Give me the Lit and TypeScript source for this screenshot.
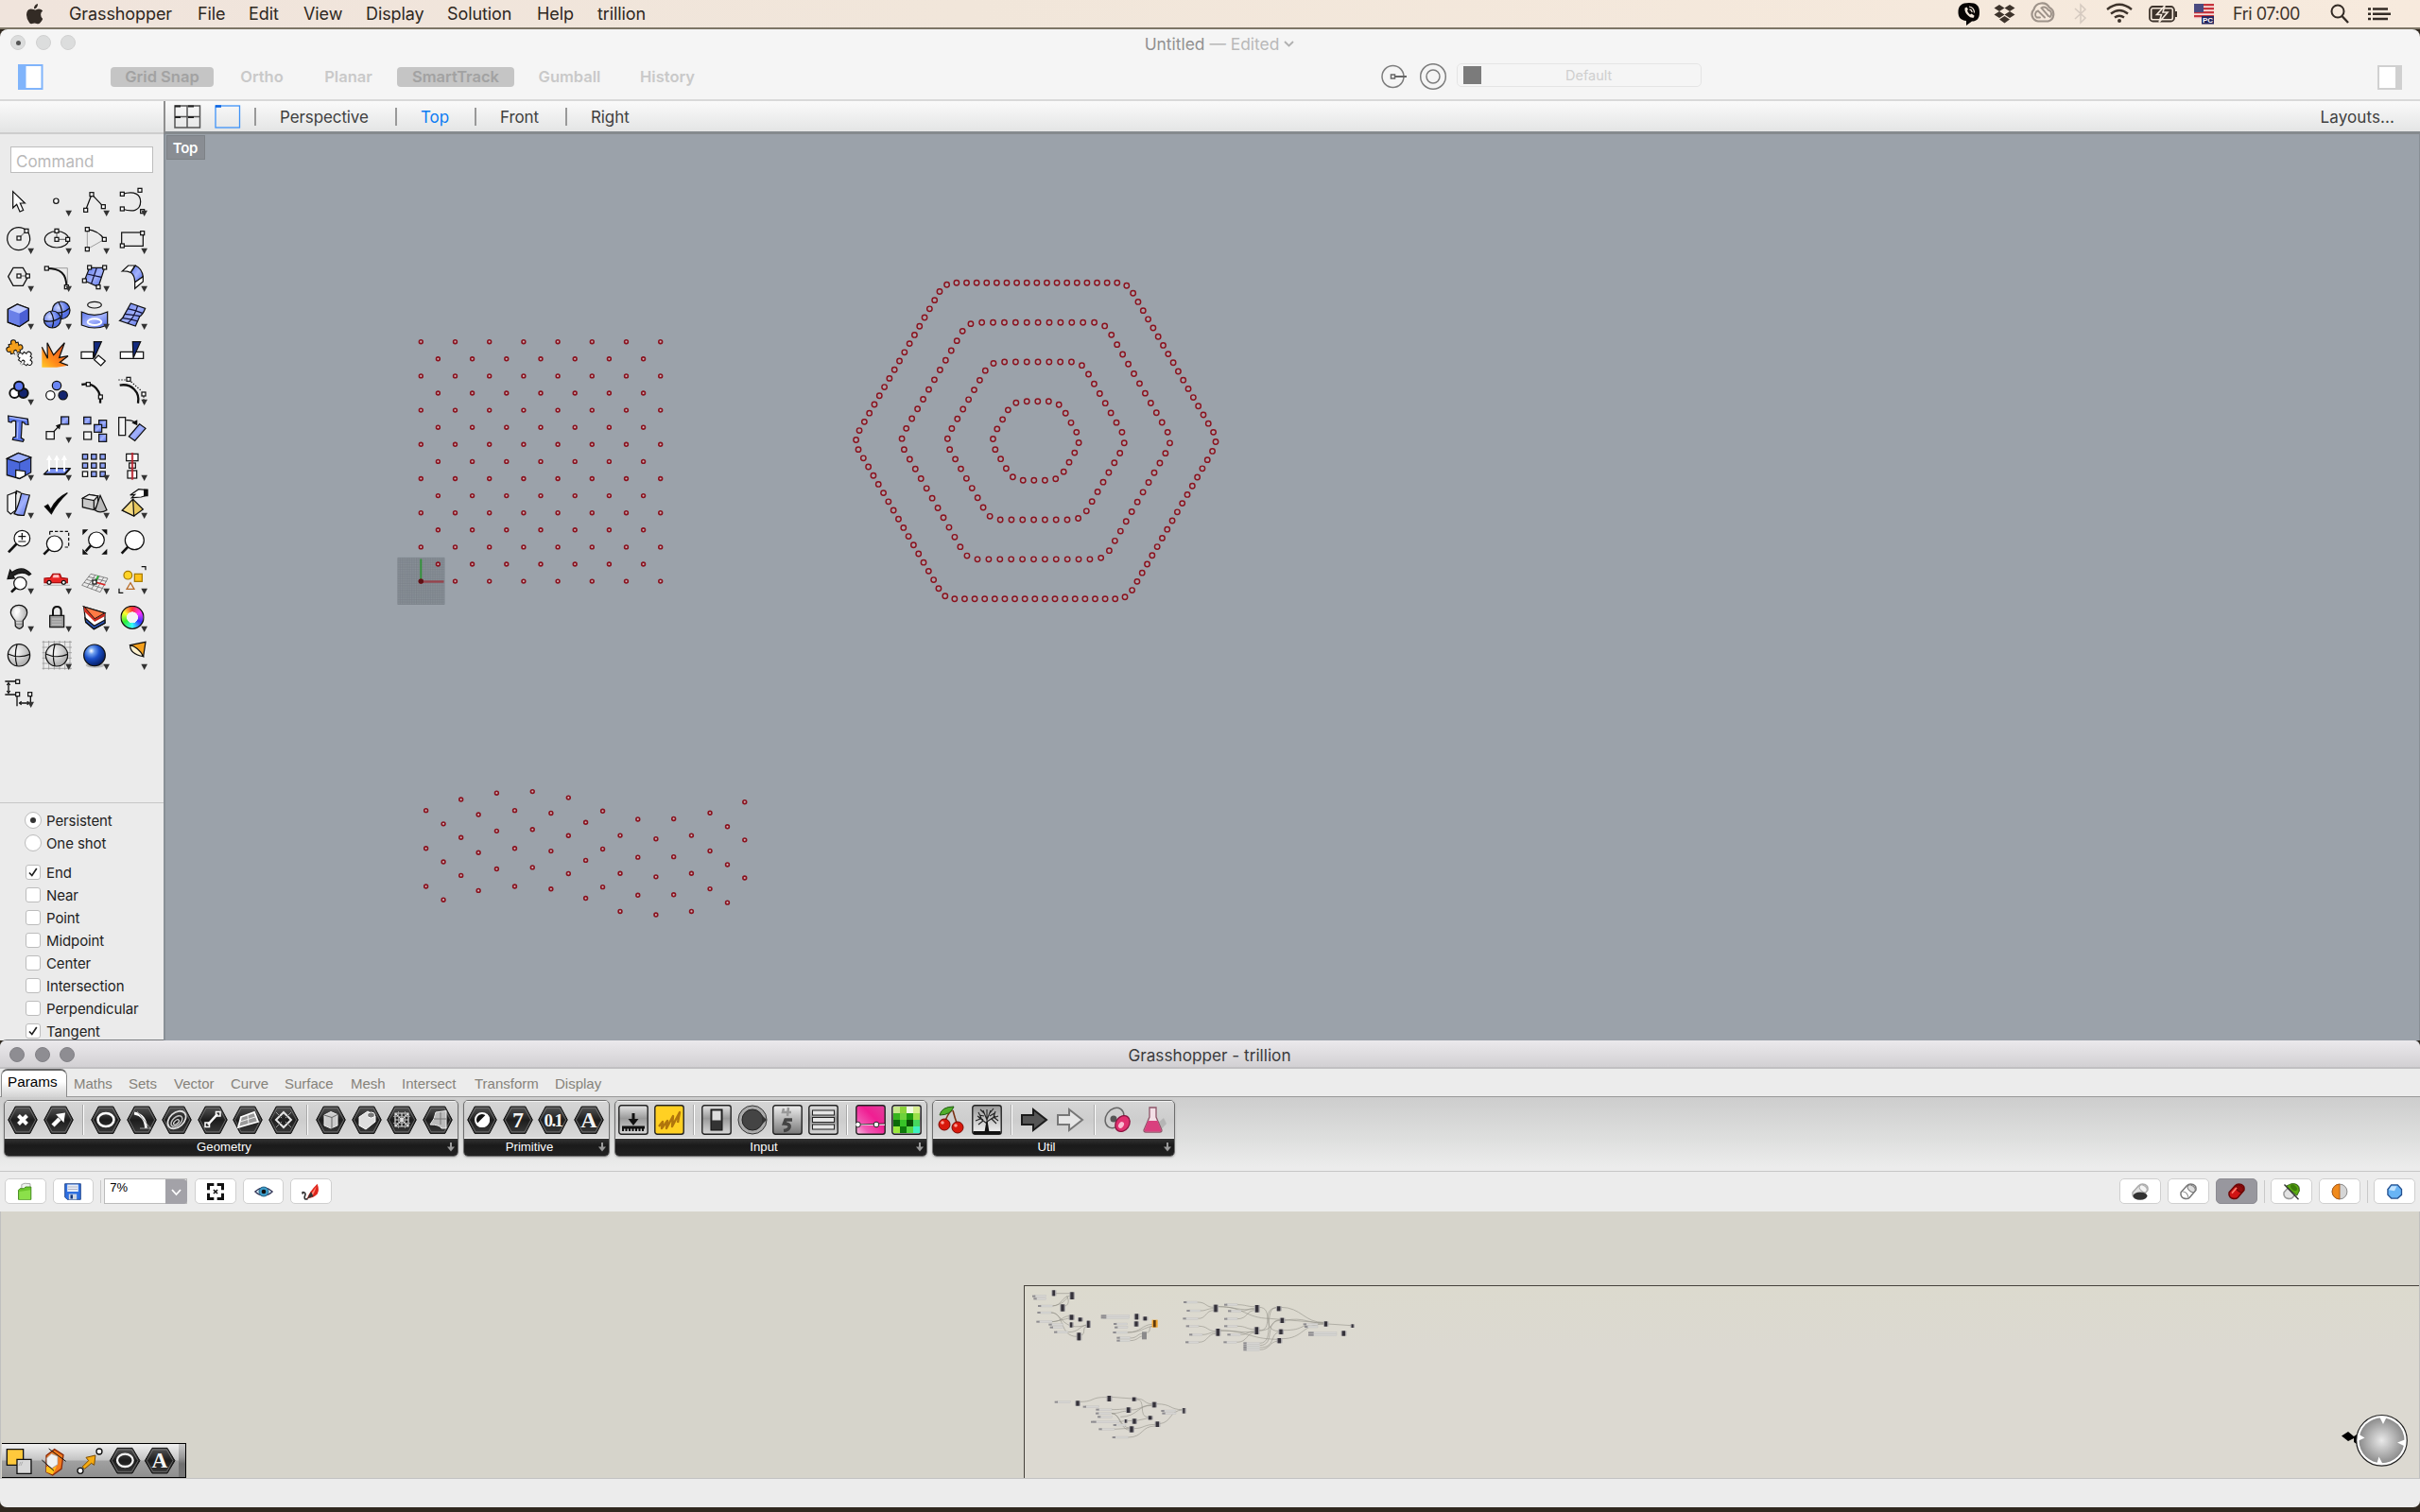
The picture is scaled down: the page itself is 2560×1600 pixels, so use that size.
import { LitElement, html, svg, css } from "lit";
import { customElement } from "lit/decorators.js";

type Cell = [string, number];

const MENUS: Cell[] = [
  ["Grasshopper", 136], ["File", 54], ["Edit", 58], ["View", 66],
  ["Display", 86], ["Solution", 95], ["Help", 64], ["trillion", 80],
];
const TABS: Cell[] = [
  ["Maths", 58], ["Sets", 48], ["Vector", 60], ["Curve", 57], ["Surface", 70],
  ["Mesh", 54], ["Intersect", 77], ["Transform", 85], ["Display", 80],
];
const SNAPS: [string, boolean][] = [
  ["End", true], ["Near", false], ["Point", false], ["Midpoint", false],
  ["Center", false], ["Intersection", false], ["Perpendicular", false], ["Tangent", true],
];

/* ---------- viewport geometry ---------- */

const ring = (x: number, y: number, r: number, w: number, fill = "none") =>
  svg`<circle cx=${x.toFixed(2)} cy=${y.toFixed(2)} r=${r} stroke-width=${w} fill=${fill}></circle>`;

function latticePoints() {
  const out = [];
  for (let row = 0; row < 15; row++) {
    const odd = row % 2;
    for (let i = 0; i < 8 - odd; i++) {
      out.push(ring(445.3 + i * 36.2 + odd * 18.1, 361.7 + row * 18.1, 1.9, 1.6, "#c9b4bb"));
    }
  }
  return out;
}

/* Points spread evenly along a hexagon whose corners are filleted with radius f. */
function hexPoints(apothem: number, count: number) {
  const cx = 1095.8, cy = 466.5, f = 18.3;
  const side = (apothem * 2) / Math.sqrt(3);
  const arc = (f * Math.PI) / 3;
  const straight = side - 2 * f * Math.tan(Math.PI / 6);
  const seg = arc + straight;
  const total = seg * 6;
  const out = [];
  const centerDist = side - f / Math.cos(Math.PI / 6);
  for (let i = 0; i < count; i++) {
    const d = (i * total) / count;
    const k = Math.floor(d / seg + 1e-9);
    const t = d - k * seg;
    const base = (k * Math.PI) / 3;
    let x: number, y: number;
    const a = t < arc ? -Math.PI / 6 + t / f : Math.PI / 6;
    x = centerDist + f * Math.cos(a);
    y = f * Math.sin(a);
    if (t > arc) {
      x -= (t - arc) * Math.sin(a);
      y += (t - arc) * Math.cos(a);
    }
    out.push(ring(cx + x * Math.cos(base) - y * Math.sin(base), cy + x * Math.sin(base) + y * Math.cos(base), 2.7, 1.45, "#a9a4ab"));
  }
  return out;
}

const WAVE: [number, number][] = [
  [276, 525.3], [287.3, 534], [298.7, 518.2], [310, 528], [321.8, 514], [333.5, 525.3], [345, 513],
  [357, 527], [368.3, 517], [379.5, 533], [390.5, 525.7], [401.8, 541.5], [413.3, 531], [425, 543.7],
  [436.5, 530.7], [448, 541.5], [460, 526.9], [471.3, 535.8], [482.5, 519.8],
];
const wavePoints = () =>
  WAVE.flatMap(([x, y]) => [0, 1, 2].map((n) => ring(x * 1.6327, (y + n * 24.6) * 1.6327, 1.9, 1.6, "#c9b4bb")));

/* ---------- sidebar tool icons (three units per pixel) ---------- */

const q = (x: number, y: number) => svg`<rect x=${x - 6} y=${y - 6} width="12" height="12" fill="#fff"></rect>`;
const bq = (x: number, y: number, s = 22, f = "url(#blue)") =>
  svg`<rect x=${x} y=${y} width=${s} height=${s} fill=${f}></rect>`;

const puzzleShape = (pad: number) => svg`<rect x=${-14 - pad} y=${-14 - pad} width=${28 + pad * 2} height=${28 + pad * 2}></rect>
  <circle cx="-18" cy="0" r=${6.5 + pad}></circle><circle cx="18" cy="2" r=${6.5 + pad}></circle><circle cx="1" cy="-18" r=${6.5 + pad}></circle>`;
const puzzle = (x: number, y: number, a: number, fill: string) => svg`<g transform=${`translate(${x} ${y}) rotate(${a})`} stroke="none">
  <g fill="#111">${puzzleShape(3)}<circle cx="0" cy="18" r="5"></circle></g><g fill=${fill}>${puzzleShape(0)}</g>
  <circle cx="0" cy="11" r="6" fill="#111"></circle><circle cx="0" cy="13" r="4" fill="#ebebeb"></circle><rect x="-3" y="13" width="6" height="10" fill="#ebebeb"></rect></g>`;

const TOOLS_A = [
  [
    svg`<path d="M41 188V240L53 229L63 252L74 247L64 225H79Z" fill="#fff"/>`,
    svg`<circle cx="178" cy="218" r="8" fill="#fff"/>`,
    svg`<path d="M272 247L291 197L328 236"/>${q(272, 247)}${q(291, 197)}${q(328, 236)}`,
    svg`<path d="M388 196C428 184 446 198 446 220C446 250 420 254 388 243"/>${q(388, 196)}${q(444, 184)}${q(388, 243)}${q(452, 251)}`,
  ],
  [
    svg`<circle cx="59" cy="338" r="36"/><path d="M60 336L83 313" stroke="#888"/>${q(60, 336)}${q(84, 313)}`,
    svg`<ellipse cx="180" cy="340" rx="38" ry="26"/><path d="M180 313V340H215" stroke="#777"/>${q(180, 313)}${q(180, 340)}${q(215, 340)}`,
    svg`<path d="M277 308V371L331 340" stroke="#777" stroke-width="2"/><path d="M277 308Q312 312 331 340"/>${q(277, 308)}${q(277, 371)}${q(331, 340)}`,
    svg`<rect x="386" y="318" width="68" height="43"/>${q(452, 320)}${q(388, 360)}`,
  ],
  [
    svg`<path d="M26 458L42 430H73L89 458L73 487H42Z"/><path d="M60 456H87" stroke="#777"/>${q(60, 456)}${q(88, 456)}`,
    svg`<path d="M148 431H214V490" stroke="#777" stroke-width="2"/><path d="M148 432C192 432 211 448 211 490" stroke-width="6"/>${q(148, 432)}${q(211, 491)}`,
    svg`<path d="M284 430H332L312 491L268 471Z" fill="url(#blue)"/><path d="M307 430L290 480M277 450L322 460" stroke="#113"/>${q(284, 429)}${q(332, 429)}${q(268, 471)}${q(312, 491)}`,
    svg`<path d="M388 441L407 423H428L415 445Q401 440 388 441Z" fill="#fff"/><path d="M415 445L430 423Q450 432 454 458L428 476Q428 455 415 445Z" fill="url(#blue)"/><path d="M428 476L454 458V474L428 496Z" fill="#fff"/>`,
  ],
  [
    svg`<path d="M25 562L55 546L91 559V597L61 617L25 603Z" fill="#6a80e8"/><path d="M25 562L55 546L91 559L62 575Z" fill="#bfcbff" stroke="none"/><path d="M62 575L91 559V597L62 616Z" fill="#4b5fd4" stroke="none"/><path d="M25 562L55 546L91 559V597L61 617L25 603Z"/>`,
    svg`<circle cx="194" cy="565" r="28" fill="url(#ball)"/><path d="M168 570Q195 580 221 558M186 540Q202 565 194 592"/><circle cx="166" cy="594" r="27" fill="url(#ball)"/><path d="M140 598Q166 606 192 588M160 568Q176 592 166 620"/>`,
    svg`<ellipse cx="300" cy="548" rx="22" ry="10"/><path d="M259 570Q300 590 341 570V612Q300 630 259 612Z" fill="url(#blue)"/><ellipse cx="300" cy="602" rx="22" ry="10" stroke="#fff" stroke-width="6"/>`,
    svg`<path d="M415 543L461 559Q453 580 443 585L430 615L380 598Q390 592 396 577Z" fill="url(#blue)"/><path d="M396 577Q425 580 445 584M437 550Q425 590 405 607M405 560Q430 565 452 574M390 590Q415 592 438 600" stroke="#113"/>`,
  ],
  [
    svg`${puzzle(80, 719, 35, "#fff")}${puzzle(46, 685, -14, "#f5a01c")}`,
    svg`<path d="M133 746V682L152 712L151 668L170 705L205 668L188 715L216 711L194 731L216 740L180 746Z" fill="url(#fire)" stroke="none"/><path d="M133 682L151 718L150 668L170 707L205 668L188 715L216 710L190 730L216 740"/>`,
    svg`<path d="M258 697H296V718H258Z" fill="#fff"/><path d="M312 708L334 726L320 741L299 722Z" fill="#fff"/><path d="M298 665H322L299 716Z" fill="#122a80"/>`,
    svg`<path d="M382 697H455V718H382Z" fill="#fff"/><path d="M421 665H446L423 716Z" fill="#122a80"/>`,
  ],
  [
    svg`<g stroke-width="6"><circle cx="46" cy="828" r="15" fill="#fff"/><circle cx="74" cy="828" r="15" fill="#13246e"/><circle cx="60" cy="806" r="15" fill="#5b76f0"/></g>`,
    svg`<circle cx="180" cy="804" r="14" fill="#6a86f5"/><circle cx="160" cy="835" r="14" fill="#fff"/><circle cx="200" cy="835" r="14" fill="#13246e"/>`,
    svg`<path d="M259 801C300 792 322 822 318 860" stroke-width="7"/>${q(280, 800)}${q(319, 840)}`,
    svg`<path d="M380 803C418 796 445 826 438 860" stroke-width="7"/><path d="M376 786H400M416 792L450 822M456 838V862" stroke-dasharray="4 5"/>${q(408, 784)}${q(456, 831)}`,
  ],
];

const arrowUp = (x: number) => svg`<path d=${`M${x} 176V136`} stroke="#fff" stroke-width="6"/><path d=${`M${x - 9} 141L${x} 124L${x + 9} 141Z`} fill="#fff" stroke="none"/>`;
const lens = (x: number, y: number, r: number, hx: number, hy: number) =>
  svg`<path d=${`M${x - r * 0.7} ${y + r * 0.7}L${hx} ${hy}`} stroke-width="8"/><circle cx=${x} cy=${y} r=${r} fill="#fff"/>`;

const TOOLS_B = [
  [
    svg`<path d="M26 0L88 10L90 28L80 27Q78 20 70 19L67 70L76 76L73 82L40 76L42 69L50 66L50 17Q38 14 36 21L27 19Z" fill="#5c78ea"/><path d="M30 5L84 14M57 20L55 72" stroke="#a9b9ff"/>`,
    svg`<rect x="147" y="50" width="25" height="24" fill="#f6f6f6"/>${bq(194, 3, 24)}<path d="M170 51L188 32"/><path d="M180 32L191 28L188 40Z" fill="#111"/>`,
    svg`${bq(266, 4)}${bq(314, 14, 24)}${bq(299, 28, 24)}${bq(266, 51, 24, "#f4f4f4")}${bq(314, 58, 24)}`,
    svg`<rect x="377" y="5" width="21" height="57" fill="#f4f4f4"/><path d="M400 14Q422 12 430 24" /><path d="M422 22L434 28L434 16Z" fill="#111"/><path d="M443 26L462 40L428 79L409 66Z" fill="url(#blue)"/>`,
  ],
  [
    svg`<path d="M22 136L58 118L98 132V180L62 200L22 188Z" fill="#4b68dc"/><path d="M22 136L58 118L98 132L62 148Z" fill="#9db0ff"/><path d="M62 148V200" stroke="#24409c"/><path d="M50 172L80 176V190L62 199L50 195Z" fill="#fff"/>`,
    svg`<path d="M140 185L158 167H222L206 185Z" fill="#7b93f5"/><path d="M140 185H206L222 167" stroke-width="6"/>${arrowUp(156)}${arrowUp(180)}${arrowUp(204)}`,
    svg`${[262, 290, 318].map((x) => [122, 150, 177].map((y) => bq(x, y, 16, x === 262 && y === 177 ? "#fff" : "#8ea2f6")))}`,
    svg`<rect x="401" y="121" width="37" height="22" fill="#fff"/><rect x="410" y="150" width="20" height="16" fill="#fff"/><rect x="405" y="174" width="29" height="24" fill="#fff"/><path d="M420 117V203" stroke="#b8202c" stroke-width="7" opacity=".85"/>`,
  ],
  [
    svg`<path d="M24 252L50 242V300L34 312L24 303Z" fill="#f4f4f4"/><path d="M52 250V238L66 244" fill="#ddd"/><path d="M68 246Q82 250 94 252L76 316Q60 318 45 311Q58 290 68 246Z" fill="url(#blue)"/>`,
    svg`<path d="M142 288L152 282L161 298Q178 262 214 245Q182 275 163 311Z" fill="#000"/>`,
    svg`<path d="M262 262L283 250L311 255V282L298 299L262 290Z" fill="#c9c9c9"/><path d="M262 262L283 250L311 255L298 269Z" fill="#f0f0f0"/><path d="M298 269V298"/><path d="M318 253L339 299Q318 312 302 300Z" fill="#b9b9b9"/>`,
    svg`<path d="M422 265L454 297L425 318L388 300Z" fill="#e8c75c"/><path d="M422 265L425 318L388 300Z" fill="#f5dc86"/><path d="M467 236L440 233L413 252L428 250L418 260L448 258L467 252Z" fill="#fff"/><path d="M458 234H468V254H458Z" fill="#111"/>`,
  ],
  [
    svg`${lens(70, 389, 25, 27, 433)}<path d="M58 383H82M70 372V394M58 399H82"/>`,
    svg`<path d="M158 367H218V417H200M158 367V380" stroke-dasharray="10 6"/>${lens(173, 406, 25, 139, 440)}`,
    svg`${lens(306, 394, 25, 272, 430)}<path d="M262 361H280L262 379ZM322 361H340V379ZM262 440V422L280 440ZM340 440H322L340 422Z" fill="#111" stroke="none"/>`,
    svg`${lens(427, 395, 30, 386, 437)}`,
  ],
  [
    svg`<path d="M24 518L32 489L38 497Q72 472 98 502L92 506Q70 490 42 508L46 516Z" fill="#222"/>${lens(64, 532, 20, 36, 560)}`,
    svg`<path d="M141 528V516L160 514L168 502H190L195 514L214 517V530H141Z" fill="#ea2626" stroke="#a11"/><path d="M170 505H186L188 514H167Z" fill="#ffc4c4" stroke="none"/><circle cx="156" cy="529" r="6" fill="#fff"/><circle cx="202" cy="529" r="6" fill="#fff"/><path d="M138 538H222" stroke="#999" stroke-width="2"/>`,
    svg`<path d="M288 502L342 516L318 560L260 538ZM275 520L334 536M281 511L338 526M267 529L326 548M302 506L276 545M316 509L290 550M329 513L304 555" stroke="#555" stroke-width="2"/><path d="M302 528L312 508" stroke="#1fae2d" stroke-width="5"/><path d="M302 528L334 537" stroke="#d22" stroke-width="5"/>${q(300, 528)}`,
    svg`<circle cx="406" cy="506" r="13" fill="#ffd428" stroke="#a67a00"/><rect x="427" y="502" width="24" height="24" fill="#ffc21c" stroke="#a67a00"/><path d="M414 530L426 550H402Z" stroke="#b86b28"/><path d="M449 479H462V490M378 548V562H391"/>`,
  ],
  [
    svg`<path d="M48 650Q34 634 34 624A26 23 0 0 1 86 624Q86 636 73 650V668Q62 684 49 668Z" fill="url(#grey)"/><path d="M50 652H72M50 661H72" stroke="#666" stroke-width="2"/><circle cx="55" cy="618" r="9" fill="#fff" opacity=".7" stroke="none"/>`,
    svg`<path d="M168 634V620Q168 606 181 606Q194 606 194 620V634" stroke-width="6"/><rect x="158" y="634" width="45" height="37" fill="#9a9a9a"/><path d="M164 645H196M164 654H196M164 662H196" stroke="#ddd" stroke-width="2"/>`,
    svg`<path d="M266 606L333 626V658L298 677L272 655Z" fill="#fff"/><path d="M266 606L333 626L300 645Z" fill="#ff7a45"/><path d="M266 606L300 645V653L268 622Z" fill="#d22e20" stroke="none"/><path d="M300 646L333 627V636L300 654Z" fill="#c5281c" stroke="none"/><path d="M270 642L299 667L333 648V658L298 677L272 655Z" fill="#2c55b8"/>`,
    svg`<foreignObject x="382" y="602" width="76" height="76"><div class="wheel"></div></foreignObject>`,
  ],
  [
    svg`<circle cx="60" cy="760" r="35" fill="url(#grey)"/><path d="M25 756Q60 772 95 757M54 726Q44 760 54 794"/>`,
    svg`<path d="M138 714V806M155 714V806M172 714V806M189 714V806M206 714V806M222 714V806M134 718H228M134 735H228M134 752H228M134 769H228M134 786H228M134 802H228" stroke="#888" stroke-width="2"/><circle cx="180" cy="760" r="35" fill="url(#grey)"/><path d="M145 756Q180 772 215 757M174 726Q164 760 174 794"/>`,
    svg`<ellipse cx="302" cy="792" rx="30" ry="8" fill="#999" stroke="none" opacity=".6"/><circle cx="300" cy="760" r="34" fill="url(#deep)"/>`,
    svg`<path d="M413 728L462 718L455 764Z" fill="#f5a01c"/><path d="M413 728Q412 756 455 764Q440 735 413 728Z" fill="#fff3cf"/>`,
  ],
  [
    svg`<path d="M16 843H50M16 885H50M27 850V878M54 890V922M97 890V910M62 912H90" stroke-width="4"/><path d="M22 855L27 848L32 855M22 873L27 880L32 873M68 907L62 912L68 917M86 907L92 912L86 917" fill="none"/>${q(56, 844)}${q(56, 884)}${q(95, 884)}`,
  ],
];

const DROPS = ["0111", "1111", "1111", "1111", "0000", "1001", "0100", "1111", "1111", "0000", "1111", "1111", "0111", "1"];

function toolCell(r: number, c: number, icon: unknown) {
  const oy = r < 6 ? 159 + 120 * r : -21 + 120 * (r - 6);
  const ox = 120 * c;
  return html`<svg class="tool" viewBox=${`${ox} ${oy} 120 120`} fill="none" stroke="#111" stroke-width="3.7">
    ${icon}
    ${DROPS[r][c] === "1"
      ? svg`<path d=${`M${ox + 88} ${oy + 89}h20l-10 19z`} fill="#333" stroke="none"></path>`
      : ""}
  </svg>`;
}

/* ---------- ribbon icons ---------- */

const hex = (inner: unknown) => html`<svg class="rib" viewBox="0 0 32 32">
  <path d="M8.2 2H23.8L31.3 16L23.8 30.4H8.2L.7 16Z" fill="url(#hexg)" stroke="#111" stroke-width="1"></path>
  <path d="M9 3.6H23L29.6 16L23 28.8H9L2.4 16Z" fill="none" stroke="#777" stroke-width=".8"></path>
  <g fill="none" stroke="#fff" stroke-width="2">${inner}</g>
</svg>`;
const tile = (inner: unknown, fill = "url(#tileg)") => html`<svg class="rib" viewBox="0 0 32 32">
  <rect x=".8" y=".8" width="30.4" height="30.4" rx="2.5" fill=${fill} stroke="#222" stroke-width="1.4"></rect>${inner}
</svg>`;
const bare = (inner: unknown) => html`<svg class="rib" viewBox="0 0 32 32">${inner}</svg>`;
const glyph = (t: string, size: number, y: number, len?: number) =>
  svg`<text x="16" y=${y} text-anchor="middle" font-family="Liberation Serif, serif" font-weight="700" font-size=${size} letter-spacing=${len ?? 0} fill="#f4f4f4" stroke="none">${t}</text>`;

const SEP = html`<i class="rsep"></i>`;

const GEOMETRY = [
  hex(svg`<path d="M11.5 11.5L20.5 20.5M20.5 11.5L11.5 20.5" stroke-width="4"/>`),
  hex(svg`<path d="M10 22L17 15" stroke-width="4.5"/><path d="M13 10L23 8.5L21.5 19Z" fill="#fff" stroke="none"/>`),
  SEP,
  hex(svg`<ellipse cx="16" cy="16" rx="8.5" ry="7" stroke-width="2.6"/>`),
  hex(svg`<path d="M8 9Q20 11 20.500 25" stroke-width="2.800"/><path d="M11 7L25 25M14 25H26" stroke="#999" stroke-width="1"/>`),
  hex(svg`<g transform="rotate(-42 16 16)"><ellipse cx="16" cy="16" rx="11" ry="7.500" stroke-width="1.8" stroke="#ddd"/><ellipse cx="15" cy="17" rx="7" ry="4.200" stroke-width="1.6" stroke="#bbb"/><ellipse cx="14" cy="17.500" rx="3.500" ry="1.800" stroke-width="1.200" stroke="#ddd"/></g>`),
  hex(svg`<path d="M11 21L21 10" stroke-width="2.6"/><rect x="8" y="19" width="4.500" height="4.500" stroke-width="1.5"/><rect x="19.500" y="7.500" width="4.500" height="4.500" stroke-width="1.5"/>`),
  hex(svg`<path d="M9 13L23 8L27 18L6 24Z" fill="#999" stroke-width="1.8"/><path d="M16 11L17 20M8 18L24 13" stroke="#eee" stroke-width="1"/>`),
  hex(svg`<path d="M16 8L24 16L16 24L8 16Z" stroke-width="2" stroke="#e4e4e4"/><path d="M8 8L24 24M24 8L8 24" stroke="#999" stroke-width="1"/><path d="M16 12.500L19.500 16L16 19.500L12.500 16Z" fill="#222" stroke="none"/>`),
  SEP,
  hex(svg`<path d="M9 11L16 7.500L23 10.500V22L16 25L9 22Z" fill="#ccc" stroke="#eee" stroke-width="1"/><path d="M9 11L17 13.500V25M17 13.500L23 10.500" stroke="#666" stroke-width="1"/>`),
  hex(svg`<path d="M8 13L17 7L25 12V18L15 26L8 22Z" fill="#ddd" stroke="#fff" stroke-width="1"/><ellipse cx="20.500" cy="11" rx="4" ry="3" fill="#777" stroke="#fff" stroke-width="1"/>`),
  hex(svg`<path d="M9 9H23V23H9ZM9 16H23M16 9V23M9 9L23 23M23 9L9 23" stroke="#ddd" stroke-width="1.200"/><path d="M12.500 7V25M19.500 7V25M7 12.500H25M7 19.500H25" stroke="#aaa" stroke-width=".8"/>`),
  hex(svg`<path d="M14 8L25 6.500V25H20Q18 21 8 21Q13 15 14 8Z" fill="#bbb" stroke="#eee" stroke-width="1"/><path d="M19 8V21M12 15H25" stroke="#777" stroke-width="1"/>`),
];
const PRIMITIVE = [
  hex(svg`<circle cx="16" cy="16" r="7" fill="#111" stroke-width="2"/><path d="M21 11A7 7 0 0 1 11 21Z" fill="#fff"/>`),
  hex(glyph("7", 24, 23.5)),
  hex(glyph("0.1", 19, 22.5, -1.6)),
  hex(glyph("A", 24, 24)),
];
const INPUT = [
  tile(svg`<path d="M4 26.500H28" stroke="#111" stroke-width="3" stroke-dasharray="2 1.500"/><path d="M4 24H28M16 9V16" stroke="#111" stroke-width="3"/><path d="M10.500 15H21.500L16 22Z" fill="#111"/>`),
  tile(svg`<path d="M5 23L9 18L8 25L14 17L13 25L20 12L19 23L27 8L25 19" fill="none" stroke="#b0750c" stroke-width="2.400" stroke-linejoin="round"/>`, "#ffd023"),
  SEP,
  tile(svg`<rect x="10" y="5" width="12" height="22" fill="#333" stroke="#111"/><rect x="11.500" y="6.500" width="9" height="10" fill="#ddd"/>`),
  bare(svg`<circle cx="16" cy="16" r="15" fill="#aaa" stroke="#333"/><circle cx="16" cy="16" r="11" fill="#444" stroke="#222"/><path d="M26 11L31 16L26 21Z" fill="#333"/>`),
  tile(svg`<path d="M12 4L11 8H20M17 3L16 12" stroke="#999" stroke-width="2.500" fill="none"/><path d="M21 16H14L12.500 20Q19 20 18 24Q17 27 12 27.500" stroke="#444" stroke-width="3.500" fill="none"/>`, "url(#tiled)"),
  tile(svg`<g fill="#e6e6e6" stroke="#222"><rect x="4.500" y="6" width="23" height="5"/><rect x="4.500" y="13.500" width="23" height="5"/><rect x="4.500" y="21" width="23" height="5"/></g>`),
  SEP,
  tile(svg`<path d="M1 21H31" stroke="#fff" stroke-width="1.500"/><path d="M1 21L31 20" stroke="#111" stroke-width=".8"/><circle cx="22" cy="21" r="2.800" fill="#fff" stroke="#222"/><circle cx="2.500" cy="21" r="2.800" fill="#fff" stroke="#222"/>`, "url(#pink)"),
  tile(svg`${["#c5e88a", "#8bd43a", "#f0fae0", "#d8ee90", "#37b41e", "#6fd23b", "#1f9a10", "#9be04a", "#0c6a08", "#38c428", "#0a4f05", "#46d85e", "#9aea3e", "#0e7a0c", "#58d842", "#3ff0c0"].map(
    (f, i) => svg`<rect x=${2 + (i % 4) * 7} y=${2 + Math.floor(i / 4) * 7} width="7" height="7" fill=${f}></rect>`)}`),
];
const UTIL = [
  bare(svg`<path d="M17 6Q12 10 9 20M18 6Q20 14 23 22" fill="none" stroke="#7a3414" stroke-width="1.600"/><path d="M4 11Q6 2 19 2Q16 11 4 11Z" fill="#4fae2a" stroke="#1f5a10"/><circle cx="9" cy="21" r="6" fill="#d8190c" stroke="#7c0a04"/><circle cx="23" cy="24" r="6" fill="#d8190c" stroke="#7c0a04"/><circle cx="7" cy="19" r="1.800" fill="#ff9c90"/><circle cx="21" cy="22" r="1.800" fill="#ff9c90"/>`),
  tile(svg`<path d="M16 29V14M16 20L7 13M16 18L25 12M16 16L12 6M16 16L20 6M9 15L4 17M10 14L7 8M23 13L28 17M23 13L25 7M13 9L9 5M19 9L23 4M21 15L26 20M12 17L7 21M16 14L16 5M12 16L6 12M20 15L28 12M13 12L8 11M19 12L24 9" stroke="#222" stroke-width="1.100" fill="none"/><path d="M13.500 29L15.300 18H16.700L18.500 29Z" fill="#111"/><rect x="1.500" y="28" width="29" height="3" fill="#111"/>`, "url(#tilel)"),
  SEP,
  bare(svg`<path d="M3 11H15V5L29 16L15 27V21H3Z" fill="#555" stroke="#1b1b1b" stroke-width="2"/>`),
  bare(svg`<path d="M3 11H15V5L29 16L15 27V21H3Z" fill="#e6e6e6" stroke="#777" stroke-width="2"/>`),
  SEP,
  bare(svg`<ellipse cx="13" cy="14" rx="9" ry="11.500" transform="rotate(35 13 14)" fill="#cfcfcf" stroke="#666" stroke-width="1.500"/><circle cx="12" cy="15" r="3.500" fill="#555"/><ellipse cx="21.500" cy="20" rx="7" ry="9" transform="rotate(35 21.500 20)" fill="#e0306f" stroke="#8a1440" stroke-width="1.300"/><ellipse cx="20" cy="21.500" rx="2.600" ry="3.600" transform="rotate(35 20 21.500)" fill="#f9bdd2"/>`),
  bare(svg`<path d="M27 14L30 20L22 29H10Z" fill="#000" opacity=".12"/><path d="M12 3H19V13L25 27Q25 29 23 29H8Q6 29 6 27L12 13Z" fill="#f3dfe6" stroke="#8d5468" stroke-width="1.300"/><path d="M10.500 17H20.500L24.500 27Q24 28.500 23 28.500H8Q6.500 28 6.500 27Z" fill="#d9407e"/>`),
];
const ribbonGroup = (name: string, items: unknown[], w: number) => html`
  <section class="group" style=${`width:${w}px`}>
    <div class="gicons">${items.map((i) => (i === SEP ? i : html`<span class="gcell">${i}</span>`))}</div>
    <div class="glabel"><span>${name}</span>
      <svg class="gdrop" viewBox="0 0 8 10"><path d="M4 0V6" stroke="#aaa" stroke-width="1.800"></path><path d="M0 4.500H8L4 9.500Z" fill="#999"></path></svg>
    </div>
  </section>`;

/* ---------- canvas toolbar ---------- */

const btn = (inner: unknown, on = false) => html`<span class="btn ${on ? "on" : ""}"><svg viewBox="0 0 24 24">${inner}</svg></span>`;
const cyl = (fill: string, line: string, end: string) =>
  svg`<path d="M2.500 13L10 4.500Q13 1.500 18 3Q22.500 5 21.500 10L13.500 19.500Q11 22 6 20.500Q1.500 18 2.500 13Z" fill=${fill} stroke=${line} stroke-width="1.800"/><ellipse cx="15.800" cy="8" rx="5.500" ry="3.600" transform="rotate(42 15.800 8)" fill=${end} stroke=${line} stroke-width="1.200"/>`;

/* ---------- node graph (three units per pixel) ---------- */

const NODES: [number, number, number, number][] = [
  [129, 76, 10, 18], [186, 82, 12, 23], [156, 121, 12, 22], [184, 154, 13, 16], [212, 163, 12, 12], [185, 178, 9, 16],
  [239, 173, 10, 22], [208, 211, 12, 24], [391, 151, 12, 18], [418, 160, 12, 12], [390, 175, 12, 16],
  [642, 122, 12, 23], [649, 198, 12, 23], [773, 123, 12, 23], [772, 193, 12, 23], [842, 127, 12, 15], [853, 164, 12, 16],
  [849, 200, 12, 16], [844, 228, 12, 16], [992, 175, 11, 16], [1048, 205, 12, 16], [1078, 184, 8, 11],
  [204, 427, 12, 16], [304, 411, 12, 18], [383, 416, 12, 12], [447, 431, 12, 17], [365, 448, 12, 17], [384, 484, 12, 16],
  [359, 486, 7, 11], [434, 475, 12, 12], [457, 493, 12, 17], [375, 508, 12, 19], [543, 450, 8, 17],
];
const PANELS: [number, number, number][] = [
  [66, 95, 44], [70, 103, 40], [84, 126, 46], [82, 147, 44], [79, 176, 50], [118, 185, 46], [122, 194, 42], [135, 209, 44],
  [284, 157, 90], [284, 163, 90], [324, 183, 44], [327, 194, 42], [322, 210, 46], [334, 227, 42], [334, 236, 42],
  [546, 114, 44], [556, 141, 44], [544, 166, 48], [554, 190, 40], [564, 217, 42], [552, 241, 42],
  [675, 122, 42], [687, 142, 42], [675, 167, 42], [675, 190, 42], [685, 217, 42], [673, 241, 42],
  [736, 244, 52], [736, 251, 52], [736, 258, 52], [736, 265, 52], [926, 184, 46], [930, 192, 42], [942, 211, 90], [942, 218, 90],
  [137, 431, 50], [227, 446, 50], [268, 455, 50], [267, 467, 50], [273, 478, 46], [252, 494, 90], [323, 504, 40],
  [277, 517, 50], [320, 543, 50], [475, 459, 46], [478, 467, 44],
];
const WIRES = `M140 86H186M130 126C160 126 160 94 186 94M130 126C165 120 165 110 180 98M176 94C186 115 178 124 170 126
M126 147C170 147 150 223 208 223M126 147C160 147 160 210 239 186M128 176C160 176 160 158 184 158M128 176C160 172 165 168 184 165M180 209C215 209 215 190 239 186M220 218C238 218 222 195 239 190
M368 210C410 210 415 185 447 184M368 210C410 210 420 195 447 190M376 228C400 228 400 214 414 214M376 236C400 236 405 222 414 222M430 210C445 210 432 192 447 190
M590 114C620 114 615 130 642 130M600 141C620 141 620 134 642 134M592 166C620 166 615 140 642 140M594 190C625 190 620 206 649 206M606 217C625 217 625 210 649 210M594 241C625 241 620 214 649 214
M717 122C745 122 745 128 773 128M729 142C750 142 750 133 773 133M717 167C750 167 745 140 773 140M717 190C745 190 745 200 772 200M727 217C750 217 750 206 772 206M715 241C750 241 745 211 772 211
M655 128C740 128 740 164 820 166L992 180M655 128C710 128 720 142 773 136M662 204C750 204 750 230 844 232M662 204C720 204 720 212 772 208
M785 130C835 130 790 205 849 206M785 204C835 204 790 132 842 132M785 204C835 204 820 172 853 172M788 244C840 244 795 132 842 130M788 251C840 251 800 172 853 170M788 258C840 258 820 212 849 210M788 265C820 265 820 238 844 238
M855 130C920 130 930 180 992 178M866 172C930 160 940 182 992 180M862 203C940 203 900 182 992 182M857 230C930 230 920 182 992 184M1003 183L1078 188
M218 430C265 430 250 414 304 416M317 415L383 420M396 420C425 420 420 437 447 437M396 422C430 422 400 479 434 479M460 437C510 437 500 455 543 455M318 455C345 455 345 453 365 453M318 467C345 467 345 460 365 460M318 467C345 467 345 513 375 513M318 467C345 467 345 520 375 520M346 478C400 478 400 440 447 442M378 456C410 456 410 442 447 440M342 494C365 488 365 492 384 490M397 490L434 482M327 517L375 514M388 515C420 515 420 502 457 502M370 543C420 543 410 507 457 507M470 500C510 495 500 458 543 456`;

@customElement("app-root")
export class AppRoot extends LitElement {
  static styles = css`
    :host { display: block; width: 2560px; height: 1600px; overflow: hidden; background: #30281f; font-family: Inter, "Liberation Sans", sans-serif; color: #2b2621; }
    * { box-sizing: border-box; }
    svg { display: block; flex: none; }
    .screen { width: 2560px; height: 1600px; display: flex; flex-direction: column; position: relative; white-space: nowrap; }
    .defs { width: 0; height: 0; position: absolute; }

    .menubar { height: 31px; flex: none; display: flex; align-items: center; background: linear-gradient(90deg, #f0e4dc, #f1e6da 40%, #f7eadd); border-bottom: 2px solid #7d7566; padding: 0 31px 0 27px; }
    .apple { width: 19px; height: 22px; margin-right: 27px; }
    .menu { font-size: 18px; letter-spacing: -0.1px; flex: none; color: #2e2721; }
    .status { margin-left: auto; display: flex; align-items: center; color: #3d332b; }
    .clock { font-size: 18px; width: 103px; letter-spacing: -0.45px; }

    .rhino { height: 1070px; flex: none; display: flex; flex-direction: column; background: #f5f5f5; border-radius: 8px 8px 0 0; overflow: hidden; }
    .titlerow { height: 28px; display: flex; align-items: center; padding-left: 11px; position: relative; }
    .light { width: 16px; height: 16px; border-radius: 50%; background: #dcdddd; border: 1px solid #d0d0d0; margin-right: 10.500px; display: grid; place-items: center; }
    .light.dot::after { content: ""; width: 5px; height: 5px; border-radius: 50%; background: #555; }
    .title { position: absolute; left: 0; right: 0; top: 5px; display: flex; justify-content: center; align-items: center; gap: 5px; padding-left: 20px; font-size: 17.400px; color: #919191; }
    .title .dim { color: #b9b9b9; }
    .tools { height: 48px; display: flex; align-items: flex-start; padding: 8px 19px 0; border-bottom: 2px solid #d9d9d9; }
    .mode { height: 21px; margin-top: 4px; border-radius: 4px; font-size: 16.500px; line-height: 21px; font-weight: 600; color: #c9c9c9; text-align: center; flex: none; }
    .mode.on { background: #c5c5c5; color: #a2a2a2; }
    .rings { margin-left: 724px; }
    .field { width: 259px; height: 25px; border: 1.500px solid #e4e4e4; border-radius: 5px; display: flex; align-items: center; padding-left: 6px; font-size: 14.500px; color: #cfcfcf; }
    .swatch { width: 19px; height: 19px; background: #7b7b7b; margin-right: 89px; }
    .panelicon { margin-left: auto; }

    .viewbar { height: 35px; display: flex; flex: none; background: linear-gradient(#fafafa, #e2e3e3); }
    .corner { width: 173px; border-bottom: 2px solid #cdcdcd; flex: none; }
    .views { flex: 1; border-left: 2px solid #8f8f8f; border-bottom: 3px solid #858a8e; display: flex; align-items: center; padding: 0 27px 0 9px; font-size: 17px; color: #404040; }
    .vsep { width: 2px; height: 19px; background: #999; flex: none; }
    .view { flex: none; padding: 2px 0 0 25px; letter-spacing: -0.1px; }
    .view.sel { color: #0a7bf3; }
    .layouts { margin-left: auto; padding-top: 2px; letter-spacing: 0.1px; }

    .work { flex: 1; display: flex; min-height: 0; }
    .side { width: 173px; flex: none; background: #ebebeb; display: flex; flex-direction: column; }
    .command { margin: 13px 0 10px 11px; width: 151px; height: 28px; flex: none; background: #fff; border: 1px solid #bdbdbd; font-size: 17px; line-height: 30px; padding-left: 5px; color: #b9b9b9; }
    .palette { display: grid; grid-template-columns: repeat(4, 40px); grid-auto-rows: 40px; height: 656px; flex: none; }
    .tool { width: 40px; height: 40px; overflow: visible; }
    .wheel { width: 76px; height: 76px; border-radius: 50%; border: 4px solid #111; background: radial-gradient(circle, #f3f3f3 0 36%, transparent 38%), conic-gradient(#f33, #f3f, #33f, #3ff, #3e3, #ff3, #f33); }
    .snaps { border-top: 1px solid #c6c6c6; padding: 6px 0 0 25.500px; font-size: 15px; color: #1e1e1e; letter-spacing: -0.1px; }
    .snap { height: 24px; display: flex; align-items: center; gap: 6.500px; }
    .snap.gap { margin-bottom: 7px; }
    .radio { width: 18px; height: 18px; margin-right: -1px; border-radius: 50%; background: #fff; border: 1px solid #bbb; display: grid; place-items: center; }
    .radio.on::after { content: ""; width: 6px; height: 6px; border-radius: 50%; background: #333; }
    .check { width: 16px; height: 16px; border-radius: 3px; background: #fff; border: 1px solid #bcbcbc; margin-left: 1px; }
    .port { flex: 1; position: relative; background: #9ba2aa; border-left: 2px solid #899097; border-right: 1px solid #888f96; overflow: hidden; }
    .scene { width: 2384px; height: 959px; }
    .tag { position: absolute; left: 1px; top: 1px; width: 41px; height: 26px; background: #898d93; border: 1px solid #7d8287; color: #fff; font-size: 15px; font-weight: 600; line-height: 26px; text-align: center; letter-spacing: -0.3px; padding-right: 1px; }

    .gh { height: 494px; flex: none; display: flex; flex-direction: column; background: #ececec; border-radius: 7px; overflow: hidden; box-shadow: 0 -1px 0 #77797d; }
    .ghtitle { height: 30px; flex: none; position: relative; display: flex; align-items: center; padding-left: 10px; background: linear-gradient(#ebe9ec, #d2d0d3); border-bottom: 2px solid #c0bfc1; }
    .ghtitle .light { background: #8e8d92; border-color: #828186; margin-top: 1px; }
    .ghtitle .name { position: absolute; inset: 2px 1px 0 0; display: grid; place-items: center; font-size: 17.200px; color: #3b3b3d; }
    .tabs { height: 30px; flex: none; display: flex; align-items: center; padding-left: 1px; font: 15px/18px "Liberation Sans", Arial, sans-serif; color: #85827a; border-bottom: 1px solid #999; }
    .tab { flex: none; padding-top: 2px; }
    .tab.cur { width: 70px; height: 31px; align-self: flex-start; margin-right: 7px; padding: 3px 0 0 6px; color: #000; font-size: 15.300px; background: linear-gradient(#fff, #fff 40%, #cfcfcf); border: 1px solid #8a8a8a; border-top: 2px solid #666; border-bottom: 0; border-radius: 7px 7px 0 0; }
    .ribbon { height: 78px; flex: none; display: flex; gap: 5px; padding: 3px 0 0 4px; background: linear-gradient(#cdcdcd, #dfe0df 60%, #ececec 95%); }
    .group { height: 60px; flex: none; border: 1px solid #6e6e6e; border-radius: 5px; overflow: hidden; display: flex; flex-direction: column; background: linear-gradient(#d6d6d6, #cdcdcd 35%, #e4e4e4); box-shadow: 0 1px 2px #8888; }
    .gicons { height: 40px; display: flex; align-items: center; padding-left: .5px; border: solid #f2f2f2; border-width: 1px 0 1px; }
    .gcell { width: 37.500px; display: grid; place-items: center; flex: none; }
    .rib { width: 32px; height: 32px; }
    .rsep { width: 13px; height: 32px; flex: none; background: linear-gradient(90deg, transparent 5.500px, #aaa 5.500px 6.500px, #fff 6.500px 7.500px, transparent 7.500px); }
    .glabel { flex: 1; background: linear-gradient(#333, #1a1a1a 40%, #222); color: #fff; display: flex; justify-content: center; position: relative; font: 13.200px/17px "Liberation Sans", Arial, sans-serif; padding-right: 15px; }
    .gdrop { width: 8px; height: 10px; position: absolute; right: 3px; top: 4px; }
    .bar { height: 43px; flex: none; border-top: 1px solid #c6c6c6; display: flex; align-items: flex-start; padding: 7px 5px 0 5px; gap: 7px; }
    .btn { width: 43.600px; height: 27px; border-radius: 5px; background: #fff; border: 1px solid #cfcfcf; display: grid; place-items: center; flex: none; }
    .btn.on { background: #98979e; border-color: #8c8b92; }
    .btn svg { width: 20px; height: 20px; }
    .bsep { width: 1px; height: 24px; background: #c9c9c9; margin-top: 2px; flex: none; }
    .zoom { width: 88px; height: 27px; display: flex; margin: 0 1px 0 -4px; border: 1px solid #bbb; background: #fff; font: 13px/18px "Liberation Sans", Arial, sans-serif; color: #000; padding-left: 5px; justify-content: space-between; flex: none; }
    .zoom .arrow { width: 23px; height: 26px; margin: -0.500px -1px 0 0; border-radius: 0 4px 4px 0; background: #a3a2a8; }
    .right { margin-left: auto; display: flex; gap: 7px; }
    .right .btn { width: 44px; }
    .right .bsep { margin: 2px -0.600px 0; }
    .canvas { height: 282px; flex: none; position: relative; background: #d6d4cb; border: solid #c0c0bf; border-width: 0 1px; }
    .graph { width: 2558px; height: 282px; }
    .dock { position: absolute; left: 1px; bottom: 0; width: 195px; height: 37px; border: 1.500px solid #000; border-left: 0; background: linear-gradient(#f1f1f1, #c4c4c4 48%, #a0a0a0 52%, #8f8f8f); display: flex; align-items: center; }
    .dock svg { width: 37.300px; height: 33px; }
    .grip { margin-left: auto; width: 7px; height: 100%; background: linear-gradient(#ccc, #999 40%, #707070 60%, #777); }
    .foot { flex: 1; border-top: 1px solid #c3c3c3; }
  `;

  private defs() {
    return html`<svg class="defs"><defs>
      <linearGradient id="blue" x1="0" y1="0" x2="1" y2="1"><stop offset="0" stop-color="#5a74e8"></stop><stop offset=".5" stop-color="#a3b2fc"></stop><stop offset="1" stop-color="#4a64e0"></stop></linearGradient>
      <radialGradient id="ball" cx=".35" cy=".35"><stop offset="0" stop-color="#cdd7ff"></stop><stop offset="1" stop-color="#5571e6"></stop></radialGradient>
      <radialGradient id="deep" cx=".35" cy=".3" r=".75"><stop offset="0" stop-color="#fff"></stop><stop offset=".2" stop-color="#6fa0f0"></stop><stop offset=".5" stop-color="#1a4fc8"></stop><stop offset="1" stop-color="#04195c"></stop></radialGradient>
      <radialGradient id="grey" cx=".35" cy=".35" r=".7"><stop offset="0" stop-color="#fff"></stop><stop offset="1" stop-color="#a9a9a9"></stop></radialGradient>
      <linearGradient id="fire" x1="0" y1="1" x2="1" y2="0"><stop offset="0" stop-color="#ffc928"></stop><stop offset=".35" stop-color="#ff8a1c"></stop><stop offset="1" stop-color="#e0441a"></stop></linearGradient>
      <linearGradient id="hexg" x1="0" y1="0" x2="0" y2="1"><stop offset="0" stop-color="#555"></stop><stop offset=".5" stop-color="#1c1c1c"></stop><stop offset="1" stop-color="#3a3a3a"></stop></linearGradient>
      <linearGradient id="tileg" x1="0" y1="0" x2="0" y2="1"><stop offset="0" stop-color="#e4e4e4"></stop><stop offset=".45" stop-color="#9a9a9a"></stop><stop offset="1" stop-color="#d8d8d8"></stop></linearGradient>
      <linearGradient id="tiled" x1="0" y1="0" x2="0" y2="1"><stop offset="0" stop-color="#efefef"></stop><stop offset="1" stop-color="#777"></stop></linearGradient>
      <linearGradient id="tilel" x1="0" y1="0" x2="0" y2="1"><stop offset="0" stop-color="#999"></stop><stop offset="1" stop-color="#f6f6f6"></stop></linearGradient>
      <linearGradient id="pink" x1="1" y1="0" x2="0" y2="1"><stop offset="0" stop-color="#e0409c"></stop><stop offset=".4" stop-color="#f01e92"></stop><stop offset=".75" stop-color="#f25ab4"></stop><stop offset="1" stop-color="#f9c4e2"></stop></linearGradient>
      <radialGradient id="dial"><stop offset="0" stop-color="#e9e9e9"></stop><stop offset="1" stop-color="#8d8d8d"></stop></radialGradient>
      <linearGradient id="page" x1="0" y1="0" x2="0" y2="1"><stop offset="0" stop-color="#dcdace"></stop><stop offset=".3" stop-color="#dcd9d1"></stop></linearGradient>
    </defs></svg>`;
  }

  private menubar() {
    return html`<header class="menubar">
      <svg class="apple" viewBox="0 0 19 22"><path d="M13 0Q13.200 2.400 11.800 3.900Q10.400 5.400 8.900 5.100Q8.800 3 10.200 1.500Q11.500 .2 13 0ZM16.100 11.600Q16 9 18.200 7.600Q16.700 5.500 14.200 5.500Q12.600 5.500 11.300 6.200Q9.900 6.700 8.600 6.100Q7 5.400 5.600 5.500Q1.100 6 1 11.800Q1.100 16.600 4.200 20.300Q5.500 21.600 7 21.100Q9.500 20.100 11.700 20.900Q13.900 21.800 15.400 20.300Q17.200 18.400 18.200 15.900Q16.200 14.600 16.100 11.600Z" fill="#332b25"></path></svg>
      ${MENUS.map(([t, w]) => html`<span class="menu" style=${`width:${w}px`}>${t}</span>`)}
      <div class="status">
        <svg width="250" height="26" viewBox="2071 2 250 26">
          <path d="M2083 3C2091 3 2094 6 2094 13C2094 20 2091 22.500 2086 22.500L2080 27V22C2074 21.500 2071.500 18 2071.500 13C2071.500 6 2075 3 2083 3Z" fill="#080504"></path>
          <path d="M2078.500 8.500Q2078 13 2082 16.500Q2085 19.500 2088 18.500L2088.500 16.500L2085.500 14.500L2084 15.500Q2081.500 13.500 2081 11L2082 10L2080.500 7.500Z" fill="#f4e8dc"></path>
          <path d="M2083 7Q2088.500 8 2088.500 13.500M2083.500 9.800Q2086 10.500 2086.200 13" stroke="#f4e8dc" fill="none" stroke-width="1.200"></path>
          <path d="M2115 5L2120.500 8.500L2115 12L2109.500 8.500ZM2126 5L2131.500 8.500L2126 12L2120.500 8.500ZM2115 12L2120.500 15.500L2115 19L2109.500 15.500ZM2126 12L2131.500 15.500L2126 19L2120.500 15.500ZM2120.500 17L2126 20.500L2120.500 24.500L2115 20.500Z" fill="#3d332b"></path>
          <g fill="none" stroke="#9e938a" stroke-width="2.200" stroke-linecap="round"><path d="M2156 22.500A7.500 7.500 0 0 1 2151.500 10A9 9 0 0 1 2168 8A7.800 7.800 0 0 1 2166.500 22.500Z"></path><path d="M2163 18.500L2156 11.500A4 4 0 0 0 2154.500 18.500H2158" stroke-width="1.900"></path><path d="M2168.500 18A4.300 4.300 0 0 0 2166.500 10.500A4.500 4.500 0 0 0 2159.500 8.500L2167 17" stroke-width="1.900"></path></g>
          <path d="M2195 9L2206 19L2201 24V5L2206 10L2195 20" fill="none" stroke="#d5cac0" stroke-width="1.500"></path>
          <g fill="none" stroke="#3d332b" stroke-width="2.400"><path d="M2229 10Q2242 -.5 2255 10M2233 14.500Q2242 7.500 2251 14.500M2237 18.500Q2242 15 2247 18.500"></path></g><circle cx="2242" cy="22" r="2" fill="#3d332b"></circle>
          <rect x="2274" y="7" width="26" height="15.500" rx="3.500" fill="none" stroke="#3d332b" stroke-width="1.800"></rect><rect x="2276.500" y="9.500" width="21" height="10.500" rx="1" fill="#3d332b"></rect><path d="M2302 12V18" stroke="#3d332b" stroke-width="2"></path><path d="M2290 6L2281.500 15.500H2286.500L2284 23.500L2293 13H2288Z" fill="#3d332b" stroke="#f4e8dc" stroke-width="1.600"></path>
        </svg>
        <svg width="41" height="26" viewBox="2321 2 41 26">
          <rect x="2321" y="4" width="21" height="16" fill="#f6dcd8"></rect><path d="M2321 5.200H2342M2321 9.200H2342M2321 13.200H2342M2321 17.200H2342" stroke="#c6343c" stroke-width="2.200"></path><rect x="2321" y="4" width="10" height="9" fill="#4a4a80"></rect>
          <rect x="2329" y="17" width="13" height="8.500" fill="#26265e"></rect><text x="2335.500" y="24" text-anchor="middle" font-family="Liberation Sans, sans-serif" font-size="8" font-weight="700" fill="#fff">PC</text>
        </svg>
        <span class="clock">Fri 07:00</span>
        <svg width="64" height="24" viewBox="2465 3 64 24" fill="none" stroke="#332b25"><circle cx="2473" cy="12" r="6.500" stroke-width="2"></circle><path d="M2477.500 17L2484 24" stroke-width="2.400"></path><path d="M2510 9.500H2526M2510 14.700H2529M2510 20H2526" stroke-width="2.400"></path><path d="M2505 9.500H2508M2505 14.700H2508M2505 20H2508" stroke-width="2.400"></path></svg>
      </div>
    </header>`;
  }

  private rhinoTop() {
    const modes: [string, number, boolean, number][] = [
      ["Grid Snap", 109, true, 28], ["Ortho", 46, false, 43], ["Planar", 51, false, 26],
      ["SmartTrack", 124, true, 25], ["Gumball", 67, false, 40], ["History", 60, false, 0],
    ];
    return html`
      <div class="titlerow">
        <i class="light dot"></i><i class="light"></i><i class="light"></i>
        <div class="title"><span>Untitled</span><span class="dim">— Edited</span>
          <svg width="11" height="7" viewBox="0 0 11 7"><path d="M1 1L5.500 5.500L10 1" fill="none" stroke="#b0b0b0" stroke-width="1.800"></path></svg></div>
      </div>
      <div class="tools">
        <svg width="98" height="30" viewBox="19 67 98 30"><rect x="20" y="69" width="24.500" height="25" fill="#fff" stroke="#80b4fb" stroke-width="2"></rect><rect x="19" y="68" width="8.500" height="27" fill="#80b4fb"></rect></svg>
        ${modes.map(([t, w, on, m]) => html`<span class="mode ${on ? "on" : ""}" style=${`width:${w}px;margin-right:${m}px`}><span>${t}</span></span>`)}
        <svg class="rings" width="81" height="30" viewBox="1460 66 81 30" fill="none" stroke="#7d7d7d" stroke-width="1.500">
          <circle cx="1473.500" cy="80" r="11.500"></circle><path d="M1475.500 80H1488" stroke-width="2" stroke="#666"></path><rect x="1471.500" y="78" width="4" height="4" stroke="#666"></rect>
          <circle cx="1516" cy="80" r="13.300"></circle><circle cx="1516" cy="80" r="7"></circle>
        </svg>
        <div class="field"><i class="swatch"></i><span>Default</span></div>
        <svg class="panelicon" width="26" height="30" viewBox="2515 67 26 30"><rect x="2516" y="70" width="24" height="24" fill="#fff" stroke="#d0d0d0" stroke-width="2"></rect><rect x="2534" y="69" width="7" height="26" fill="#d0d0d0"></rect></svg>
      </div>
      <div class="viewbar">
        <div class="corner"></div>
        <div class="views">
          <svg width="85" height="26" viewBox="184 110 85 26" fill="none"><path d="M185 112H211.500V135H185ZM198 112V135M185 123.500H211.500" stroke="#555" stroke-width="1.500"></path><path d="M185 112.500H191M199 112.500H205M185 124H191M199 124H205" stroke="#222" stroke-width="2"></path><rect x="228" y="112" width="25.500" height="23" stroke="#3f93f7" stroke-width="1.300"></rect><path d="M228 112.500H234" stroke="#0a62e0" stroke-width="2.500"></path></svg>
          <i class="vsep"></i><span class="view" style="width:147px">Perspective</span>
          <i class="vsep"></i><span class="view sel" style="width:82px">Top</span>
          <i class="vsep"></i><span class="view" style="width:94px">Front</span>
          <i class="vsep"></i><span class="view">Right</span>
          <span class="layouts">Layouts...</span>
        </div>
      </div>`;
  }

  private sidebar() {
    const rows = [...TOOLS_A, ...TOOLS_B];
    return html`<aside class="side">
      <div class="command">Command</div>
      <div class="palette">${rows.map((row, r) => row.map((icon, c) => toolCell(r, c, icon)))}</div>
      <div class="snaps">
        <div class="snap"><i class="radio on"></i>Persistent</div>
        <div class="snap gap"><i class="radio"></i>One shot</div>
        ${SNAPS.map(([t, on]) => html`<div class="snap"><i class="check">${on
          ? html`<svg viewBox="0 0 14 14"><path d="M3 7.500L5.800 10.500L10.800 3" fill="none" stroke="#222" stroke-width="1.700"></path></svg>` : ""}</i>${t}</div>`)}
      </div>
    </aside>`;
  }

  private viewport() {
    const lines = [];
    for (let i = 0; i <= 20; i++) {
      const d = i * 2.46;
      lines.push(svg`<path d=${`M${420.9 + d} 590.300v49.200M420.900 ${590.3 + d}h49.200`}></path>`);
    }
    return html`<main class="port">
      <svg class="scene" viewBox="175 142 2384 959">
        <rect x="420.700" y="590" width="49.500" height="50" fill="#888f96"></rect>
        <g stroke="#7b8289" stroke-width=".6">${lines}</g>
        <path d="M445.300 615V591.500" stroke="#33913a" stroke-width="2"></path><path d="M445.300 615.500H469.500" stroke="#96434c" stroke-width="2.400"></path>
        <g stroke="#8a121e">
          ${latticePoints()}${wavePoints()}
          ${hexPoints(167.2, 108)}${hexPoints(125.3, 72)}${hexPoints(83.5, 48)}${hexPoints(41.8, 24)}
        </g>
        <circle cx="445.300" cy="615" r="2.600" fill="#5e1014"></circle>
      </svg>
      <div class="tag">Top</div>
    </main>`;
  }

  private graph() {
    return html`<svg class="graph" viewBox="1 1282 2558 282">
      <rect x="1083.500" y="1360.500" width="1500" height="230" fill="url(#page)" stroke="#45413b"></rect>
      <g transform="translate(1070 1340) scale(.33333)">
        <path d=${WIRES} fill="none" stroke="#8f8d84" stroke-width="1.700"></path>
        ${PANELS.map(([x, y, w]) => svg`<rect x=${x + 8} y=${y - 3} width=${w - 8} height="6" fill="#d6d5d3" stroke="#bcbbba" stroke-width="1"></rect><rect x=${x} y=${y - 3} width=${w > 80 ? 17 : 10} height="6" fill="#8e8c90"></rect>`)}
        ${NODES.map(([x, y, w, h]) => svg`<rect x=${x - 2} y=${y} width=${w + 5} height=${h} fill="#a5a3a6"></rect><rect x=${x + 1} y=${y} width=${w - 2} height=${h} fill="#35323a"></rect>`)}
        <rect x="414" y="208" width="15" height="24" fill="#8b8a8b"></rect>
        <rect x="446" y="170" width="18" height="24" fill="#f0a22c"></rect><rect x="450" y="171" width="8" height="22" fill="#5c3a10"></rect>
      </g>
      <path d="M2477 1519.500L2484 1515L2490 1520L2493 1518V1528L2490 1526V1522L2484 1525Z" fill="#000"></path>
      <circle cx="2519.500" cy="1524.300" r="26.800" fill="#fff" stroke="#222" stroke-width="1.200"></circle>
      <circle cx="2519.500" cy="1524.300" r="24" fill="url(#dial)"></circle>
      <path d="M2517 1499H2525L2521 1507ZM2514 1550H2521L2516.500 1541.500ZM2494 1517V1525L2501.500 1521.500ZM2545 1523V1531L2536 1526.500Z" fill="#fff"></path>
    </svg>`;
  }

  private grasshopper() {
    return html`<section class="gh">
      <div class="ghtitle"><i class="light"></i><i class="light"></i><i class="light"></i><span class="name">Grasshopper - trillion</span></div>
      <nav class="tabs"><span class="tab cur">Params</span>${TABS.map(([t, w]) => html`<span class="tab" style=${`width:${w}px`}>${t}</span>`)}</nav>
      <div class="ribbon">
        ${ribbonGroup("Geometry", GEOMETRY, 481)}${ribbonGroup("Primitive", PRIMITIVE, 155)}
        ${ribbonGroup("Input", INPUT, 331)}${ribbonGroup("Util", UTIL, 257)}
      </div>
      <div class="bar">
        ${btn(svg`<path d="M7 9V3L11 1.500L18 2V10" fill="#eef3ee" stroke="#999"/><path d="M3 10L5 8H10L12 6H19V22H3Z" fill="#6cc72c" stroke="#3a7f14"/><path d="M4 22V12L18 10V22Z" fill="#8be04a"/>`)}
        ${btn(svg`<path d="M2 2H22V22H5L2 19Z" fill="#2f6fe0" stroke="#15387e"/><rect x="5" y="3" width="14" height="9" fill="#e8eef8"/><path d="M6 6H18M6 9H18" stroke="#aab"/><rect x="7" y="15" width="10" height="7" fill="#cdd5e2"/><rect x="9" y="16" width="3" height="5" fill="#15387e"/>`)}
        <i class="bsep"></i>
        <div class="zoom"><span>7%</span><svg class="arrow" viewBox="0 0 23 26"><path d="M7 11L11.500 16L16 11" fill="none" stroke="#fff" stroke-width="1.800"></path></svg></div>
        ${btn(svg`<path d="M3 10V3H10M14 3H21V10M21 14V21H14M10 21H3V14" fill="none" stroke="#111" stroke-width="3.600"/><path d="M9.500 9.500L14.500 14.500M14.500 9.500L9.500 14.500" stroke="#111" stroke-width="1.800"/>`)}
        ${btn(svg`<path d="M1 12Q12 2 23 12Q12 22 1 12Z" fill="#cfe6f2" stroke="#335" stroke-width="1.500"/><circle cx="12" cy="12" r="6" fill="#3d9cc9" stroke="#1d5677"/><circle cx="12" cy="12" r="2.800" fill="#111"/>`)}
        ${btn(svg`<path d="M2 15Q0 12 3 13Q6 14 4 18Q3 23 8 21" fill="none" stroke="#333" stroke-width="2"/><path d="M20 2Q23 10 20 15Q16 20 7 21Q9 13 20 2Z" fill="#e0251b"/><path d="M19 5Q14 12 8 21L13 19Q17 12 19 5Z" fill="#ff8a78"/><path d="M7 21L12 12L15 18Z" fill="#333"/>`)}
        <div class="right">
          ${btn(svg`${cyl("#e2e2e2", "#aaa", "#f4f4f4")}<ellipse cx="12" cy="17.500" rx="9" ry="5" fill="#333"/>`)}
          ${btn(svg`${cyl("#fff", "#777", "#ddd")}<path d="M5 12Q10 12 12 19" fill="none" stroke="#888" stroke-width="1.300"/>`)}
          ${btn(svg`${cyl("#d01414", "#6b0606", "#8e0a0a")}<path d="M6 14L12 7" stroke="#ff7a6a" stroke-width="2"/>`, true)}
          <i class="bsep"></i>
          ${btn(svg`${cyl("#e2e2e2", "#999", "#ddd")}<path d="M5 5L12 2Q22 1 22 11L19 17Z" fill="#5cab12" stroke="#27570a"/><ellipse cx="15" cy="7" rx="5" ry="3" transform="rotate(42 15 7)" fill="#3c7d0a"/><path d="M3 3L21 22" stroke="#333" stroke-width="1.600"/>`)}
          ${btn(svg`<circle cx="12" cy="12" r="9.500" fill="#d5d5d5" stroke="#777"/><path d="M12 2.500A9.500 9.500 0 0 0 12 21.500Z" fill="#f08a1c" stroke="#a8520a"/>`)}
          <i class="bsep"></i>
          ${btn(svg`<path d="M8 3.500H16L21 9V16L16 20.500H8L3.500 16V9Z" fill="#68b4f5" stroke="#24508f" stroke-width="1.600"/><path d="M8 5H15L12 11L5 10Z" fill="#c3e4ff"/>`)}
        </div>
      </div>
      <div class="canvas">
        ${this.graph()}
        <div class="dock">
          <svg viewBox="6 84 112 99"><path d="M22 98H74V148H22Z" fill="#ffc93c" stroke="#111" stroke-width="4"></path><path d="M54 130H99V175H54Z" fill="#d9d9d9" stroke="#111" stroke-width="4"></path><path d="M66 138L60 150M72 137L66 150" stroke="#999" stroke-width="2"></path></svg>
          <svg viewBox="118 84 112 99"><path d="M148 118L174 98L202 116L196 160L168 180L148 170Z" fill="#f47a1c" stroke="#8a2a08" stroke-width="4"></path><path d="M148 152L168 160L182 150L168 178L148 170Z" fill="#ffc21c"></path><path d="M149 126L164 112L184 120V146L166 158L150 148Z" fill="#f1f1f1" stroke="#999" stroke-width="2"></path><path d="M134 132L172 166M156 96L210 136" stroke="#111" stroke-width="3"></path></svg>
          <svg viewBox="230 84 112 99"><path d="M260 154L280 134L272 124L302 117L298 148L289 142L268 160Z" fill="#f6ab10" stroke="#7a4a00" stroke-width="3"></path><circle cx="314" cy="105" r="9" fill="#fff" stroke="#111" stroke-width="4"></circle><circle cx="254" cy="166" r="9" fill="#fff" stroke="#111" stroke-width="4"></circle></svg>
          <svg viewBox="342 84 112 99"><path d="M372 94H420L444 134L420 174H372L349 134Z" fill="url(#hexg)" stroke="#111" stroke-width="3"></path><path d="M374 99H418L438 134L418 169H374L355 134Z" fill="none" stroke="#888" stroke-width="2"></path><ellipse cx="397" cy="133" rx="25" ry="20" fill="none" stroke="#f4f4f4" stroke-width="7"></ellipse></svg>
          <svg viewBox="454 84 112 99"><path d="M484 94H532L556 134L532 174H484L461 134Z" fill="url(#hexg)" stroke="#111" stroke-width="3"></path><path d="M486 99H530L550 134L530 169H486L467 134Z" fill="none" stroke="#888" stroke-width="2"></path><text x="508" y="157" text-anchor="middle" font-family="Liberation Serif, serif" font-weight="700" font-size="70" fill="#f4f4f4">A</text></svg>
          <i class="grip"></i>
        </div>
      </div>
      <div class="foot"></div>
    </section>`;
  }

  render() {
    return html`<div class="screen">
      ${this.defs()}
      ${this.menubar()}
      <section class="rhino">
        ${this.rhinoTop()}
        <div class="work">${this.sidebar()}${this.viewport()}</div>
      </section>
      ${this.grasshopper()}
    </div>`;
  }
}
